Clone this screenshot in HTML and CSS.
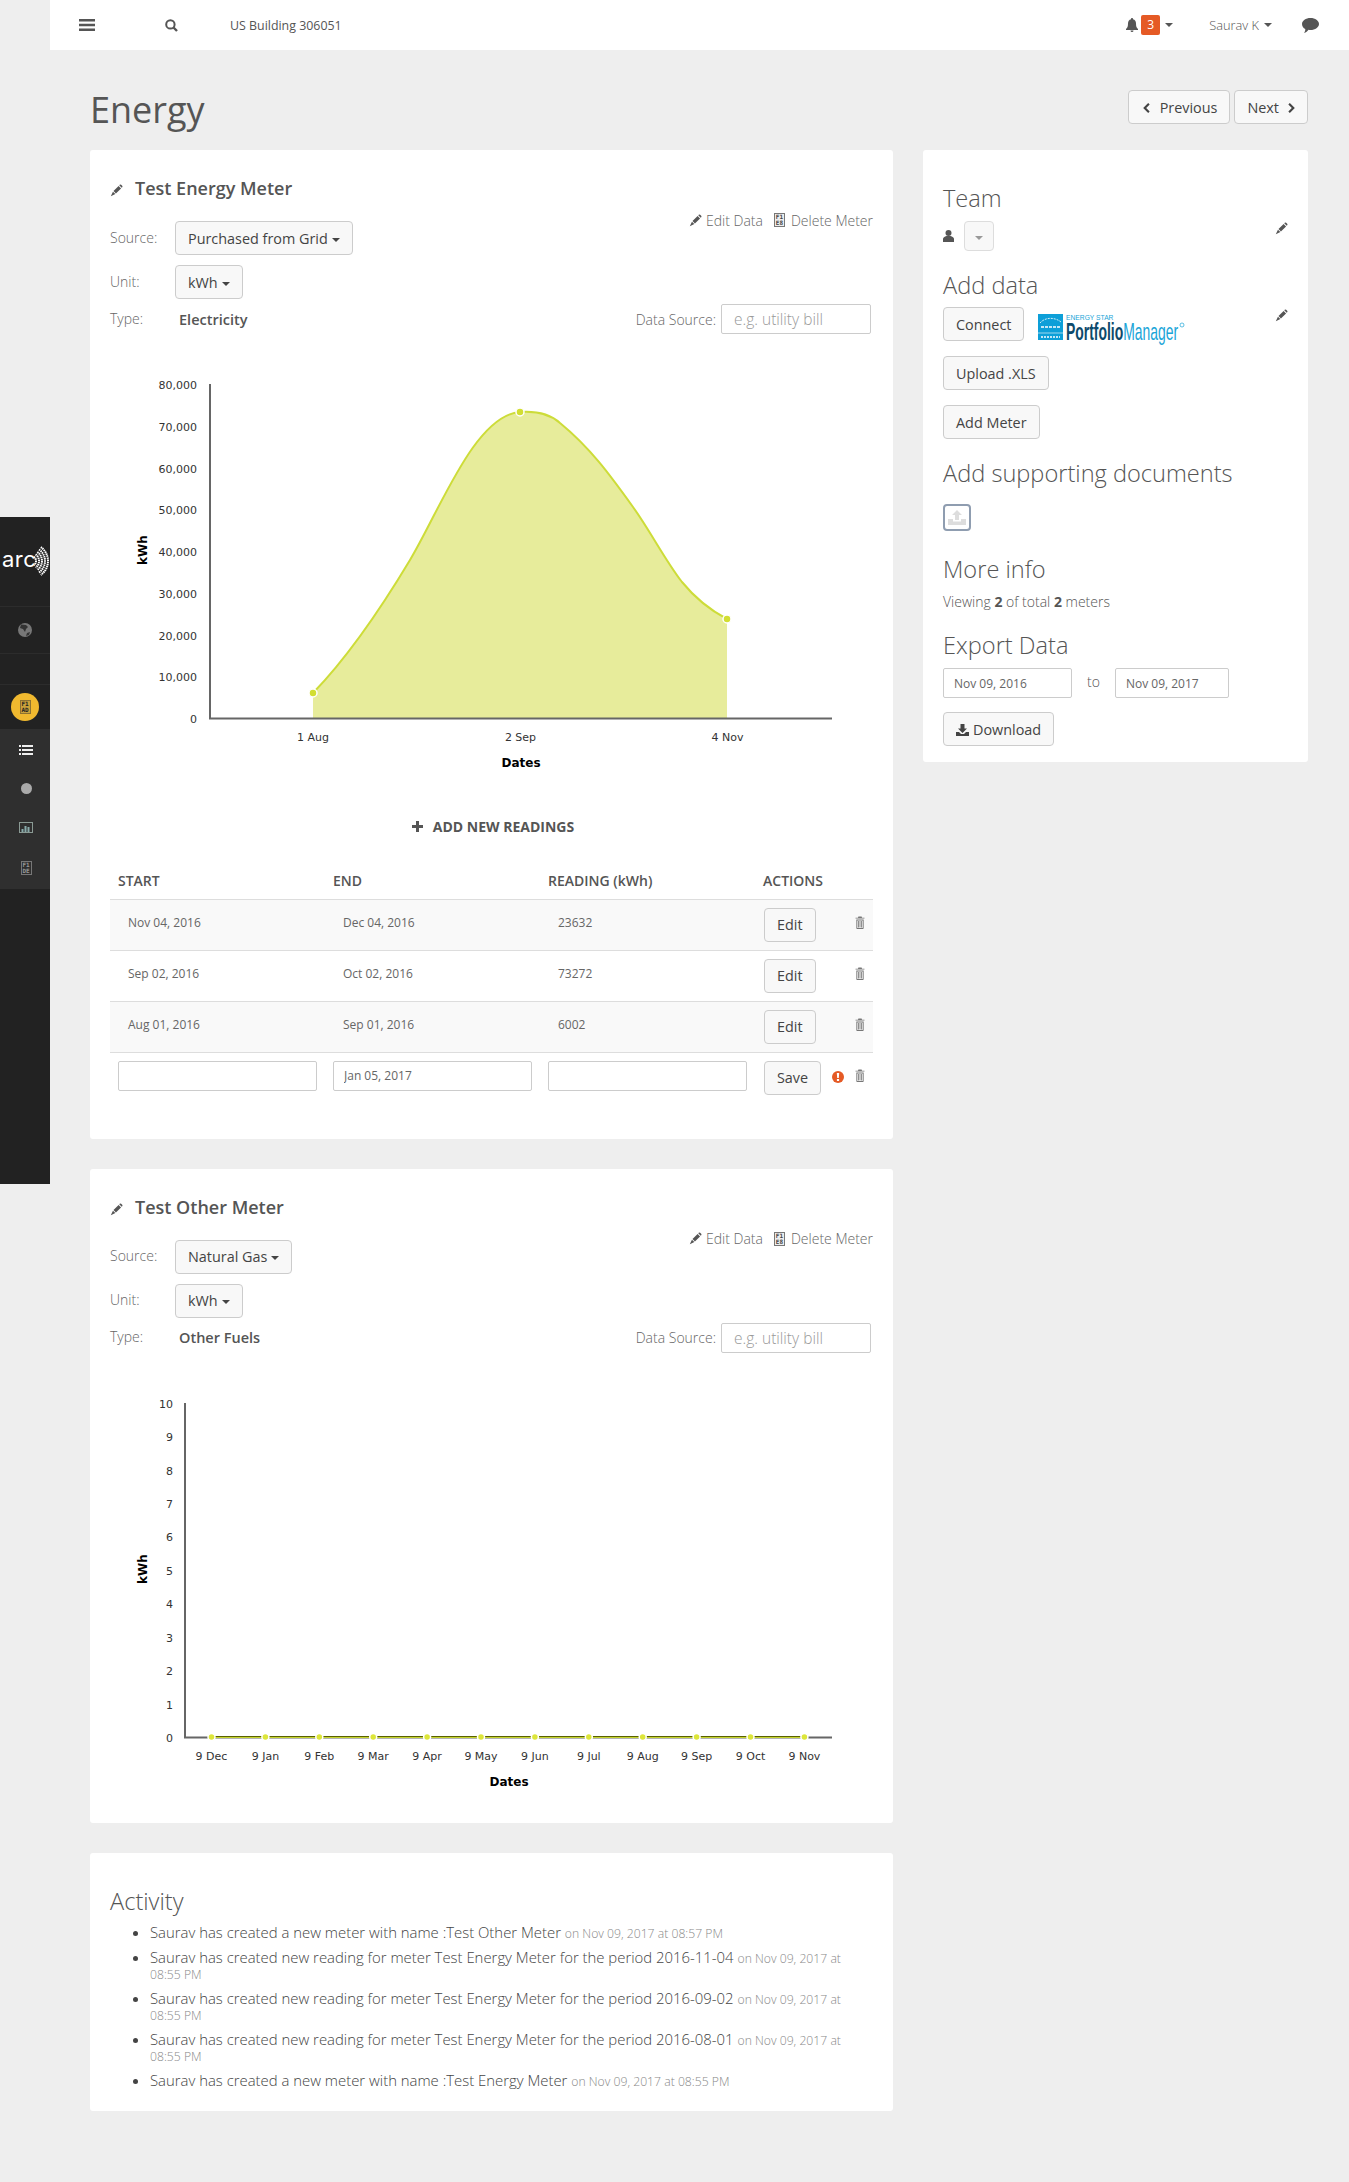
FILE: index.html
```html
<!DOCTYPE html>
<html lang="en">
<head>
    <meta charset="UTF-8">
    <meta name="viewport" content="width=device-width, initial-scale=1.0">
    <title>Energy</title>
    <link rel="stylesheet" href="styles.css">
</head>
<body>
    <svg class="icon-defs" width="0" height="0">
        <symbol id="i-pencil" viewBox="0 0 16 16"><path d="M4.3 8.7 10.6 2.4l3 3-6.3 6.3zM11.4 1.6l.6-.6a1.2 1.2 0 0 1 1.7 0L15 2.3a1.2 1.2 0 0 1 0 1.7l-.6.6zM3.6 9.4l3 3L1 15z"/></symbol>
        <symbol id="i-trash" viewBox="0 0 12 16"><path d="M4 .5h4l.5 1.5H11.5v1.2H.5V2h3zM1.500 4.200h9V15a1 1 0 0 1-1 1h-7a1 1 0 0 1-1-1zM2.700 5.400V14.800h6.600V5.400zM3.600 6.200h1v8h-1zM5.500 6.200h1v8h-1zM7.400 6.200h1v8h-1z" fill-rule="evenodd"/></symbol>
        <symbol id="i-caret-l" viewBox="0 0 8 12"><path d="M6 0 7.8 1.8 3.6 6l4.2 4.2L6 12 0 6z"/></symbol>
        <symbol id="i-caret-r" viewBox="0 0 8 12"><path d="M2 0 .2 1.8 4.4 6 .2 10.2 2 12l6-6z"/></symbol>
    </svg>

    <aside class="sidebar">
        <div class="side-logo">
            <svg width="50" height="50" viewBox="0 0 50 50">
                <text x="2" y="32" class="arc-word">arc</text>
                <g class="arc-waves">
                    <path d="M33.900 21.900A5 5 0 0 1 33.900 30.100"/>
                    <path d="M35.600 19.400A8 8 0 0 1 35.600 32.600"/>
                    <path d="M37.300 17A11 11 0 0 1 37.300 35"/>
                    <path d="M39 14.500A14 14 0 0 1 39 37.500"/>
                    <path d="M40.800 12.100A17 17 0 0 1 40.800 39.900"/>
                </g>
            </svg>
        </div>
        <div class="side-item side-globe">
            <svg width="14" height="14" viewBox="0 0 14 14"><circle cx="7" cy="7" r="7" fill="#777"/><path d="M3 1.5 8 2l2 2-2 2-1 3-2-3-3-1zM9 10l3-1-1 3-3 1z" fill="#333"/></svg>
        </div>
        <div class="side-item side-gap"></div>
        <div class="side-item side-active">
            <span class="side-circle"><span class="tofu tofu-dark">F1<br>AD</span></span>
        </div>
        <div class="side-sub">
            <svg class="side-sub-icon" width="14" height="10" viewBox="0 0 14 10"><path d="M0 0h2v2H0zM3 0h11v2H3zM0 4h2v2H0zM3 4h11v2H3zM0 8h2v2H0zM3 8h11v2H3z" fill="#eee"/></svg>
            <span class="side-dot"></span>
            <svg class="side-sub-icon" width="14" height="11" viewBox="0 0 14 11"><rect x=".5" y=".5" width="13" height="10" fill="none" stroke="#8a9a94"/><path d="M2.500 7h2v3h-2zM5.500 4h2v6h-2zM8.500 5h2v5h-2z" fill="#8aa"/></svg>
            <span class="tofu tofu-grey">F1<br>DE</span>
        </div>
    </aside>

    <div class="page">
        <header class="topbar">
            <svg class="hamburger" width="16" height="12" viewBox="0 0 16 12"><path d="M0 0h16v2.400H0zM0 4.800h16v2.400H0zM0 9.600h16V12H0z" fill="#555"/></svg>
            <svg class="search" width="13" height="13" viewBox="0 0 13 13"><circle cx="5.400" cy="5.400" r="4.200" fill="none" stroke="#555" stroke-width="2"/><path d="M8.500 8.500 12 12" stroke="#555" stroke-width="2.400"/></svg>
            <span class="building">US Building 306051</span>
            <div class="topbar-right">
                <svg class="bell" width="12" height="14" viewBox="0 0 12 14"><path d="M6 0a1 1 0 0 1 1 1.200C9 1.700 10 3.300 10 5.500c0 3 .6 4.300 2 5.500v1H0v-1c1.400-1.200 2-2.500 2-5.500 0-2.200 1-3.800 3-4.300A1 1 0 0 1 6 0zM4.500 12.500h3A1.500 1.500 0 0 1 6 14a1.500 1.500 0 0 1-1.500-1.500z" fill="#555"/></svg>
                <span class="badge">3</span>
                <span class="caret caret-bell"></span>
                <span class="user">Saurav K</span>
                <span class="caret caret-user"></span>
                <svg class="chat" width="17" height="15" viewBox="0 0 17 15"><path d="M8.500 0C13.200 0 17 2.700 17 6s-3.800 6-8.500 6c-.7 0-1.300 0-2-.2C5.500 13.300 4 14.500 2 15c.8-1 1.300-2 1.300-3.900C1.300 10 0 8.100 0 6c0-3.300 3.800-6 8.500-6z" fill="#555"/></svg>
            </div>
        </header>

        <div class="title-row">
            <h1>Energy</h1>
            <div class="pager">
                <button class="btn btn-prev"><svg class="chev" width="7" height="10"><use href="#i-caret-l"/></svg>Previous</button>
                <button class="btn">Next<svg class="chev chev-r" width="7" height="10"><use href="#i-caret-r"/></svg></button>
            </div>
        </div>

        <div class="columns">
            <main class="left-col">
                <section class="card meter-card meter-first">
                    <h2 class="meter-title"><svg class="pencil" width="13" height="13"><use href="#i-pencil"/></svg>Test Energy Meter</h2>
                    <div class="meter-top">
                        <div class="meter-fields">
                            <div class="field"><label>Source:</label><button class="btn">Purchased from Grid<span class="caret"></span></button></div>
                            <div class="field"><label>Unit:</label><button class="btn">kWh<span class="caret"></span></button></div>
                            <div class="field field-type"><label>Type:</label><b>Electricity</b></div>
                        </div>
                        <div class="meter-side">
                            <div class="meter-links">
                                <svg class="pencil" width="13" height="13"><use href="#i-pencil"/></svg><span>Edit Data</span>
                                <span class="tofu tofu-link">F1<br>E8</span><span>Delete Meter</span>
                            </div>
                            <div class="data-source"><label>Data Source:</label><input type="text" placeholder="e.g. utility bill"></div>
                        </div>
                    </div>
                    <svg class="chart chart-readings" width="763" height="467" viewBox="110 334 763 467">
                        <path class="area" d="M313 693C345 660 380 610 410 560C440 510 475 415 520 412C532 411.200 548 412 560 423C590 447.500 610 475 633 507C650 530.600 665 560 682 582C695 598 710 610 727 619V718H313Z"/>
                        <path class="spline" d="M313 693C345 660 380 610 410 560C440 510 475 415 520 412C532 411.200 548 412 560 423C590 447.500 610 475 633 507C650 530.600 665 560 682 582C695 598 710 610 727 619"/>
                        <path class="axis" d="M210 384V718.500H832"/>
                        <circle class="dot" cx="313" cy="693" r="4"/>
                        <circle class="dot" cx="520" cy="412" r="4"/>
                        <circle class="dot" cx="727" cy="619" r="4"/>
                        <g class="ticks-y">
                            <text x="197" y="389">80,000</text>
                            <text x="197" y="431">70,000</text>
                            <text x="197" y="473">60,000</text>
                            <text x="197" y="514">50,000</text>
                            <text x="197" y="556">40,000</text>
                            <text x="197" y="598">30,000</text>
                            <text x="197" y="640">20,000</text>
                            <text x="197" y="681">10,000</text>
                            <text x="197" y="723">0</text>
                        </g>
                        <g class="ticks-x">
                            <text x="313" y="741">1 Aug</text>
                            <text x="520.500" y="741">2 Sep</text>
                            <text x="727.500" y="741">4 Nov</text>
                        </g>
                        <text class="axis-title" x="521" y="767">Dates</text>
                        <text class="axis-title" transform="rotate(-90 147 550)" x="147" y="550">kWh</text>
                    </svg>
                    <div class="add-readings">
                        <svg width="11" height="11" viewBox="0 0 11 11"><path d="M4 0h3v4h4v3H7v4H4V7H0V4h4z" fill="#555"/></svg>ADD NEW READINGS
                    </div>
                    <table class="readings">
                        <thead>
                            <tr><th>START</th><th>END</th><th>READING (kWh)</th><th>ACTIONS</th></tr>
                        </thead>
                        <tbody>
                            <tr>
                                <td><span class="cell-text">Nov 04, 2016</span></td>
                                <td><span class="cell-text">Dec 04, 2016</span></td>
                                <td><span class="cell-text">23632</span></td>
                                <td><div class="row-actions"><button class="btn">Edit</button><svg class="trash" width="10" height="13"><use href="#i-trash"/></svg></div></td>
                            </tr>
                            <tr>
                                <td><span class="cell-text">Sep 02, 2016</span></td>
                                <td><span class="cell-text">Oct 02, 2016</span></td>
                                <td><span class="cell-text">73272</span></td>
                                <td><div class="row-actions"><button class="btn">Edit</button><svg class="trash" width="10" height="13"><use href="#i-trash"/></svg></div></td>
                            </tr>
                            <tr>
                                <td><span class="cell-text">Aug 01, 2016</span></td>
                                <td><span class="cell-text">Sep 01, 2016</span></td>
                                <td><span class="cell-text">6002</span></td>
                                <td><div class="row-actions"><button class="btn">Edit</button><svg class="trash" width="10" height="13"><use href="#i-trash"/></svg></div></td>
                            </tr>
                            <tr class="new-row">
                                <td><input type="text"></td>
                                <td><input type="text" value="Jan 05, 2017"></td>
                                <td><input type="text"></td>
                                <td><div class="row-actions"><button class="btn">Save</button>
                                    <svg class="warn" width="12" height="12" viewBox="0 0 12 12"><circle cx="6" cy="6" r="6" fill="#e55a25"/><path d="M4.800 2h2.400l-.4 5H5.200zM4.900 8h2.200v2H4.900z" fill="#fff"/></svg>
                                    <svg class="trash" width="10" height="13"><use href="#i-trash"/></svg></div></td>
                            </tr>
                        </tbody>
                    </table>
                </section>

                <section class="card meter-card meter-second">
                    <h2 class="meter-title"><svg class="pencil" width="13" height="13"><use href="#i-pencil"/></svg>Test Other Meter</h2>
                    <div class="meter-top">
                        <div class="meter-fields">
                            <div class="field"><label>Source:</label><button class="btn">Natural Gas<span class="caret"></span></button></div>
                            <div class="field"><label>Unit:</label><button class="btn">kWh<span class="caret"></span></button></div>
                            <div class="field field-type"><label>Type:</label><b>Other Fuels</b></div>
                        </div>
                        <div class="meter-side">
                            <div class="meter-links">
                                <svg class="pencil" width="13" height="13"><use href="#i-pencil"/></svg><span>Edit Data</span>
                                <span class="tofu tofu-link">F1<br>E8</span><span>Delete Meter</span>
                            </div>
                            <div class="data-source"><label>Data Source:</label><input type="text" placeholder="e.g. utility bill"></div>
                        </div>
                    </div>
                    <svg class="chart" width="763" height="470" viewBox="110 1353 763 470">
                        <path class="axis" d="M185 1403V1737.500H832"/>
                        <path class="flat-dark" d="M211 1736.500H804"/>
                        <path class="flat-line" d="M211 1737.500H804"/>
                        <g class="flat-dots">
                            <circle cx="211.500" cy="1737" r="3.500"/><circle cx="265.400" cy="1737" r="3.500"/><circle cx="319.300" cy="1737" r="3.500"/>
                            <circle cx="373.200" cy="1737" r="3.500"/><circle cx="427.100" cy="1737" r="3.500"/><circle cx="481" cy="1737" r="3.500"/>
                            <circle cx="534.900" cy="1737" r="3.500"/><circle cx="588.800" cy="1737" r="3.500"/><circle cx="642.700" cy="1737" r="3.500"/>
                            <circle cx="696.600" cy="1737" r="3.500"/><circle cx="750.500" cy="1737" r="3.500"/><circle cx="804.400" cy="1737" r="3.500"/>
                        </g>
                        <g class="ticks-y">
                            <text x="173" y="1408">10</text>
                            <text x="173" y="1441">9</text>
                            <text x="173" y="1475">8</text>
                            <text x="173" y="1508">7</text>
                            <text x="173" y="1541">6</text>
                            <text x="173" y="1575">5</text>
                            <text x="173" y="1608">4</text>
                            <text x="173" y="1642">3</text>
                            <text x="173" y="1675">2</text>
                            <text x="173" y="1709">1</text>
                            <text x="173" y="1742">0</text>
                        </g>
                        <g class="ticks-x">
                            <text x="211.500" y="1760">9 Dec</text>
                            <text x="265.400" y="1760">9 Jan</text>
                            <text x="319.300" y="1760">9 Feb</text>
                            <text x="373.200" y="1760">9 Mar</text>
                            <text x="427.100" y="1760">9 Apr</text>
                            <text x="481" y="1760">9 May</text>
                            <text x="534.900" y="1760">9 Jun</text>
                            <text x="588.800" y="1760">9 Jul</text>
                            <text x="642.700" y="1760">9 Aug</text>
                            <text x="696.600" y="1760">9 Sep</text>
                            <text x="750.500" y="1760">9 Oct</text>
                            <text x="804.400" y="1760">9 Nov</text>
                        </g>
                        <text class="axis-title" x="509" y="1786">Dates</text>
                        <text class="axis-title" transform="rotate(-90 147 1569)" x="147" y="1569">kWh</text>
                    </svg>
                </section>

                <section class="card activity">
                    <h3>Activity</h3>
                    <ul>
                        <li>Saurav has created a new meter with name :Test Other Meter <small>on Nov 09, 2017 at 08:57 PM</small></li>
                        <li>Saurav has created new reading for meter Test Energy Meter for the period 2016-11-04 <small>on Nov 09, 2017 at 08:55 PM</small></li>
                        <li>Saurav has created new reading for meter Test Energy Meter for the period 2016-09-02 <small>on Nov 09, 2017 at 08:55 PM</small></li>
                        <li>Saurav has created new reading for meter Test Energy Meter for the period 2016-08-01 <small>on Nov 09, 2017 at 08:55 PM</small></li>
                        <li>Saurav has created a new meter with name :Test Energy Meter <small>on Nov 09, 2017 at 08:55 PM</small></li>
                    </ul>
                </section>
            </main>

            <aside class="card side-card">
                <h3 class="h-team">Team</h3>
                <div class="side-row">
                    <div class="team-left">
                        <svg width="11" height="12" viewBox="0 0 11 12"><circle cx="5.500" cy="3" r="3" fill="#555"/><path d="M0 12V9c0-1.500 1.500-2.500 3.500-3h4c2 .5 3.500 1.500 3.500 3v3z" fill="#555"/></svg>
                        <button class="btn btn-team"><span class="caret"></span></button>
                    </div>
                    <svg class="pencil-side" width="13" height="13"><use href="#i-pencil"/></svg>
                </div>
                <h3 class="h-add">Add data</h3>
                <div class="side-row">
                    <div class="connect-row">
                        <button class="btn">Connect</button>
                        <svg class="pm-logo" width="150" height="34" viewBox="0 0 150 34">
                            <rect x="0" y="2" width="25" height="26" fill="#0d9fd8"/>
                            <path d="M2 11C7 5 17 5 23 10" fill="none" stroke="#fff" stroke-width=".8" stroke-dasharray="2 1"/>
                            <path d="M3 15h19" stroke="#fff" stroke-width="1.500" stroke-dasharray="3 1"/>
                            <path d="M0 21h25" stroke="#fff" stroke-width=".6"/>
                            <path d="M3 25h19" stroke="#fff" stroke-width="1.500" stroke-dasharray="2 1"/>
                            <text class="pm-star" transform="translate(28 8) scale(.84 1)">ENERGY STAR</text>
                            <text class="pm-name" transform="translate(28 28) scale(.58 1)"><tspan class="pm-portfolio">Portfolio</tspan><tspan class="pm-manager">Manager</tspan></text>
                            <circle cx="144" cy="13" r="2" fill="none" stroke="#1aa5d8" stroke-width=".7"/>
                        </svg>
                    </div>
                    <svg class="pencil-side" width="13" height="13"><use href="#i-pencil"/></svg>
                </div>
                <button class="btn btn-stack btn-upload">Upload .XLS</button>
                <button class="btn btn-stack btn-meter">Add Meter</button>
                <h3 class="h-docs">Add supporting documents</h3>
                <div class="upload-box">
                    <svg width="18" height="15" viewBox="0 0 18 15"><path d="M9 0l5 5h-3v5H7V5H4zM0 9h5v2.500h8V9h5v6H0z" fill="#ddd"/></svg>
                </div>
                <h3 class="h-more">More info</h3>
                <p class="viewing">Viewing <b>2</b> of total <b>2</b> meters</p>
                <h3 class="h-export">Export Data</h3>
                <div class="export-dates">
                    <input type="text" class="date-from" value="Nov 09, 2016">
                    <span>to</span>
                    <input type="text" class="date-to" value="Nov 09, 2017">
                </div>
                <button class="btn btn-download"><svg width="13" height="12" viewBox="0 0 13 12"><path d="M4.500 0h4v4.500H11L6.500 9 2 4.500h2.500zM0 8h3l2 2h3l2-2h3v4H0z" fill="#444"/></svg>Download</button>
            </aside>
        </div>
    </div>
</body>
</html>
```

FILE: styles.css
```css
body {
    margin: 0;
    background-color: #eee;
    color: #555;
    font-family: "Open Sans", sans-serif;
    font-size: 14px;
    position: relative;
}

.icon-defs {
    position: absolute;
}

/* sidebar */
.sidebar {
    position: absolute;
    top: 517px;
    left: 0;
    width: 50px;
    height: 667px;
    background-color: #222;
}

.side-logo {
    height: 90px;
    padding-top: 18px;
    box-sizing: border-box;
    border-bottom: 1px solid #2c2c2c;
}

.side-logo svg {
    display: block;
}

.arc-word {
    font-family: Inter, sans-serif;
    font-size: 22px;
    fill: #fff;
    letter-spacing: .5px;
}

.arc-waves path {
    fill: none;
    stroke: #fff;
    stroke-width: 2;
    stroke-dasharray: 1.500 .6;
}

.side-item {
    display: flex;
    align-items: center;
    justify-content: center;
    border-bottom: 1px solid #2c2c2c;
}

.side-globe {
    height: 46px;
}

.side-gap {
    height: 30px;
}

.side-active {
    height: 44px;
    border-bottom: 0;
}

.side-circle {
    width: 28px;
    height: 28px;
    border-radius: 50%;
    background-color: #f0b92f;
    display: flex;
    align-items: center;
    justify-content: center;
}

.side-sub {
    height: 160px;
    background-color: #2f2f2f;
    display: flex;
    flex-direction: column;
    align-items: center;
    justify-content: space-around;
    padding: 2px 0 0 2px;
    box-sizing: border-box;
}

.side-dot {
    width: 11px;
    height: 11px;
    border-radius: 50%;
    background-color: #aaa;
}

.tofu {
    display: inline-block;
    box-sizing: border-box;
    width: 11px;
    height: 14px;
    border: 1px solid #777;
    font-family: "DejaVu Sans Mono", monospace;
    font-size: 6px;
    font-weight: 700;
    line-height: 6px;
    text-align: center;
    overflow: hidden;
}

.tofu-dark {
    background-color: #c9a03a;
    border-color: #8c7232;
    color: #222;
}

.tofu-grey {
    border-color: #777;
    color: #999;
}

.tofu-link {
    margin: 0 6px 0 11px;
    color: #444;
    background-color: #eee;
}

/* top bar */
.page {
    margin-left: 50px;
    height: 2182px;
}

.topbar {
    height: 50px;
    background-color: #fff;
    display: flex;
    align-items: center;
}

.hamburger {
    margin-left: 29px;
}

.search {
    margin-left: 70px;
}

.building {
    margin-left: 52px;
    font-size: 12.400px;
}

.topbar-right {
    margin-left: auto;
    display: flex;
    align-items: center;
    padding-right: 30px;
}

.badge {
    width: 19px;
    height: 20px;
    margin-left: 3px;
    background-color: #e55a25;
    border-radius: 2px;
    color: #fff;
    font-size: 12px;
    line-height: 20px;
    text-align: center;
}

.caret {
    display: inline-block;
    width: 0;
    height: 0;
    margin-left: 4px;
    vertical-align: middle;
    border-top: 4px solid;
    border-left: 4px solid transparent;
    border-right: 4px solid transparent;
}

.caret-bell {
    margin-left: 5px;
}

.user {
    margin-left: 36px;
    font-size: 12.800px;
    font-weight: 300;
}

.caret-user {
    margin-left: 5px;
}

.chat {
    margin-left: 30px;
}

/* title */
.title-row {
    height: 100px;
    padding: 0 41px 0 40px;
    display: flex;
    justify-content: space-between;
    align-items: flex-start;
}

h1 {
    margin: 36px 0 0;
    font-size: 36px;
    font-weight: 400;
    line-height: 48px;
    color: #555;
}

.pager {
    margin-top: 40px;
    display: flex;
    gap: 4px;
}

.btn {
    height: 34px;
    padding: 0 12px;
    box-sizing: border-box;
    background-color: #f8f8f8;
    border: 1px solid #ccc;
    border-radius: 4px;
    color: #444;
    font-family: "Open Sans", sans-serif;
    font-size: 14.400px;
    white-space: nowrap;
}

.btn-prev {
    padding-left: 14px;
}

.chev {
    fill: #444;
    margin-right: 10px;
}

.chev-r {
    margin: 0 0 0 9px;
}

/* columns and cards */
.columns {
    display: flex;
    align-items: flex-start;
    gap: 30px;
    padding: 0 41px 0 40px;
}

.left-col {
    width: 803px;
    display: flex;
    flex-direction: column;
    gap: 30px;
}

.card {
    background-color: #fff;
    border-radius: 3px;
    padding: 0 20px;
}

.meter-first {
    padding-bottom: 36px;
}

.meter-title {
    margin: 0;
    padding-top: 26px;
    height: 24px;
    line-height: 24px;
    font-size: 18px;
    font-weight: 600;
    display: flex;
    align-items: center;
    box-sizing: content-box;
}

.meter-title .pencil {
    margin: 5px 12px 0 0;
}

.pencil {
    fill: #555;
}

.meter-top {
    margin-top: 21px;
    display: flex;
    justify-content: space-between;
}

.meter-fields {
    display: flex;
    flex-direction: column;
    gap: 10px;
}

.field {
    display: flex;
    align-items: center;
    font-weight: 300;
}

.field label {
    width: 65px;
    color: #666;
    margin-top: -2px;
}

.field .btn {
    font-weight: 400;
}

.field b {
    margin-left: 4px;
    font-size: 14.500px;
    font-weight: 600;
    color: #555;
}

.field-type {
    height: 30px;
    margin-top: -5px;
}

.meter-side {
    margin-top: -11px;
    display: flex;
    flex-direction: column;
    justify-content: space-between;
    align-items: flex-end;
    font-weight: 300;
}

.meter-links {
    height: 20px;
    display: flex;
    align-items: center;
    color: #666;
}

.meter-links .pencil {
    margin-right: 4px;
}

.data-source {
    display: flex;
    align-items: center;
    gap: 5px;
    margin-right: 2px;
    color: #666;
}

input[type=text] {
    height: 30px;
    box-sizing: border-box;
    border: 1px solid #ccc;
    border-radius: 2px;
    background-color: #fff;
    color: #666;
    font-family: "Open Sans", sans-serif;
    font-size: 12px;
    padding: 0 10px;
    width: 100%;
}

.data-source input {
    width: 150px;
    padding-left: 12px;
    font-size: 15.500px;
    font-weight: 300;
}

::placeholder {
    color: #999;
}

/* charts */
.chart {
    display: block;
}

.area {
    fill: #e7ec9b;
}

.spline {
    fill: none;
    stroke: #cddc39;
    stroke-width: 2;
}

.axis {
    fill: none;
    stroke: #666;
    stroke-width: 2;
}

.dot {
    fill: #d2de32;
    stroke: #fff;
    stroke-width: 1.500;
}

.ticks-y text,
.ticks-x text {
    font-family: "DejaVu Sans", sans-serif;
    font-size: 11px;
    fill: #333;
}

.ticks-y text {
    text-anchor: end;
}

.ticks-x text,
.axis-title {
    text-anchor: middle;
}

.axis-title {
    font-family: "DejaVu Sans", sans-serif;
    font-size: 12px;
    font-weight: 700;
    fill: #000;
}

.flat-dark {
    stroke: #5a6000;
    stroke-width: 1;
}

.flat-line {
    stroke: #c6d62e;
    stroke-width: 1;
}

.flat-dots circle {
    fill: #dde63a;
    stroke: #fff;
    stroke-width: 1.500;
}

/* readings table */
.add-readings {
    height: 50px;
    display: flex;
    align-items: center;
    justify-content: center;
    gap: 10px;
    font-size: 14px;
    font-weight: 700;
    padding-left: 3px;
    box-sizing: border-box;
}

.readings {
    width: 763px;
    border-collapse: collapse;
    table-layout: fixed;
}

.readings th {
    width: 215px;
    height: 48px;
    padding: 0 8px 8px;
    box-sizing: border-box;
    vertical-align: bottom;
    text-align: left;
    font-size: 14px;
    font-weight: 600;
    line-height: 20px;
    border-bottom: 1px solid #ddd;
}

.readings th:last-child {
    width: 118px;
}

.readings td {
    padding: 8px;
    vertical-align: top;
    font-size: 12px;
    color: #666;
    border-bottom: 1px solid #ddd;
}

.readings tbody tr:nth-child(odd) {
    background-color: #f9f9f9;
}

.readings .new-row {
    background-color: #fff;
}

.readings .new-row td {
    border-bottom: 0;
}

.cell-text {
    display: block;
    padding: 5px 0 0 10px;
    line-height: 20px;
}

.row-actions {
    display: flex;
    align-items: flex-start;
}

.row-actions .btn {
    margin-left: 1px;
}

.row-actions .trash {
    margin: 8px 0 0 auto;
}

.trash {
    fill: #777;
}

.new-row .warn {
    margin: 10px 0 0 11px;
}

.new-row .btn {
    width: 57px;
    padding: 0 10px;
}

/* side card */
.side-card {
    width: 345px;
    padding-top: 31px;
    padding-bottom: 16px;
}

.side-card h3,
.activity h3 {
    margin: 0;
    font-size: 23.600px;
    font-weight: 300;
    line-height: 34px;
    color: #555;
}

.side-row {
    display: flex;
    justify-content: space-between;
    align-items: flex-start;
}

.team-left {
    margin-top: 6px;
    display: flex;
    align-items: center;
    gap: 10px;
}

.btn-team {
    width: 30px;
    height: 30px;
    padding: 0;
    color: #999;
    border-color: #ddd;
}

.btn-team .caret {
    margin: 0;
}

.pencil-side {
    fill: #555;
    margin-top: 7px;
}

.h-add {
    margin-top: 17px !important;
}

.connect-row {
    margin-top: 5px;
    display: flex;
    align-items: flex-start;
    gap: 14px;
}

.pm-logo {
    margin-top: 5px;
    margin-bottom: -5px;
}

.pm-star {
    font-family: "Liberation Sans", sans-serif;
    font-size: 8px;
    fill: #1aa5d8;
}

.pm-name {
    font-family: "Liberation Sans", sans-serif;
    font-size: 24px;
}

.pm-portfolio {
    font-weight: 700;
    fill: #0d4a6b;
}

.pm-manager {
    fill: #1aa5d8;
}

.btn-stack,
.btn-download {
    display: block;
}

.btn-upload {
    margin-top: 15px;
}

.btn-meter {
    margin-top: 15px;
}

.h-docs {
    margin-top: 17px !important;
}

.upload-box {
    margin-top: 14px;
    width: 28px;
    height: 27px;
    box-sizing: border-box;
    border: 2px solid #8f9db0;
    border-radius: 4px;
    display: flex;
    align-items: center;
    justify-content: center;
}

.h-more {
    margin-top: 21px !important;
}

.viewing {
    margin: 6px 0 0;
    line-height: 20px;
    font-weight: 300;
    font-size: 14px;
}

.viewing b {
    font-weight: 700;
}

.h-export {
    margin-top: 16px !important;
}

.export-dates {
    margin-top: 6px;
    display: flex;
    align-items: center;
    font-weight: 300;
}

.export-dates span {
    margin: -3px 15px 0;
    font-size: 14px;
}

.date-from {
    width: 129px !important;
}

.date-to {
    width: 114px !important;
}

.btn-download {
    margin-top: 14px;
}

.btn-download svg {
    margin-right: 4px;
    vertical-align: -1px;
}

/* activity */
.activity {
    padding-top: 31px;
    padding-bottom: 23px;
}

.activity ul {
    margin: 6px 0 0;
    padding: 0 5px 0 40px;
    font-size: 14.900px;
    font-weight: 300;
    line-height: 16px;
    color: #444;
}

.activity li {
    margin-bottom: 9px;
}

.activity li:last-child {
    margin-bottom: 0;
}

.activity small {
    font-size: 12.200px;
    font-weight: 300;
    line-height: 12px;
    color: #888;
}
```
